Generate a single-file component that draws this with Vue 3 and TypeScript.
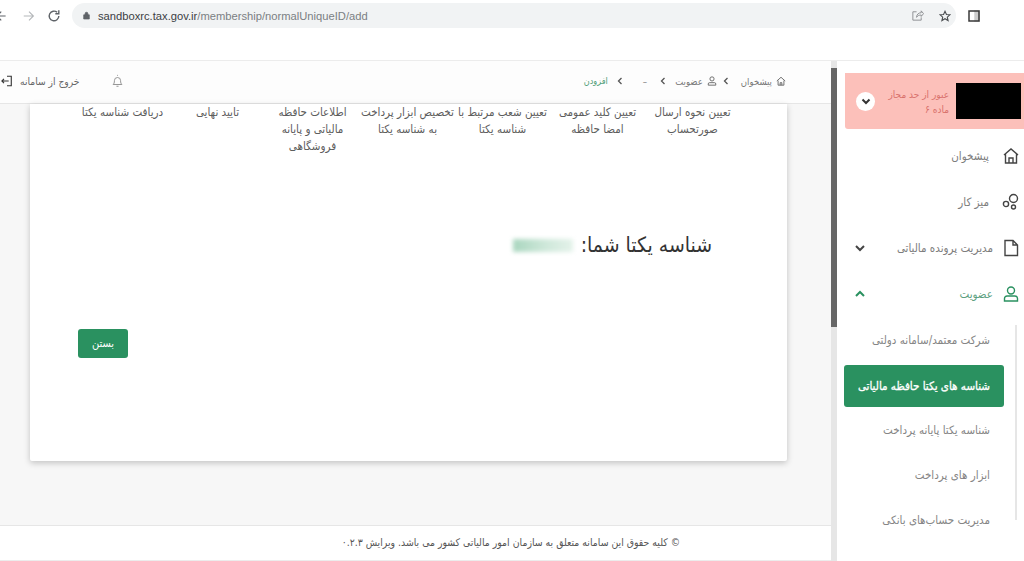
<script setup lang="ts">
const steps: string[][] = [
  ['تعیین نحوه ارسال', 'صورتحساب'],
  ['تعیین کلید عمومی', 'امضا حافظه'],
  ['تعیین شعب مرتبط با', 'شناسه یکتا'],
  ['تخصیص ابزار پرداخت', 'به شناسه یکتا'],
  ['اطلاعات حافظه', 'مالیاتی و پایانه', 'فروشگاهی'],
  ['تایید نهایی'],
  ['دریافت شناسه یکتا'],
]
const subItems: string[] = ['شرکت معتمد/سامانه دولتی', 'شناسه های یکتا حافظه مالیاتی', 'شناسه یکتا پایانه پرداخت', 'ابزار های پرداخت', 'مدیریت حساب‌های بانکی']
</script>

<template>
  <div class="page">
    <div class="chrome" dir="ltr">
      <svg class="nav back" viewBox="0 0 16 16"><path d="M11 8H1M6 3 1 8l5 5" /></svg>
      <svg class="nav fwd" viewBox="0 0 16 16"><path d="M2 8h11M8 3l5 5-5 5" /></svg>
      <svg class="nav reload" viewBox="0 0 16 16"><path d="M13.5 8A5.5 5.5 0 1 1 11.6 3.8M13.5 1.5v4h-4" /></svg>
      <div class="omni">
        <svg class="lock" viewBox="0 0 10 12"><path d="M1 5h8v6H1zM3 5V3.4a2 2 0 0 1 4 0V5" /></svg>
        <span class="url"><b>sandboxrc.tax.gov.ir</b>/membership/normalUniqueID/add</span>
        <svg class="share" viewBox="0 0 14 14"><path d="M6 3H2v9h9V9M6 9c0-3 2-5 5-5V2l2.500 3L11 8V6.500C9 6.500 7 7 6 9Z" /></svg>
        <svg class="star" viewBox="0 0 14 14"><path d="m7 1.500 1.700 3.700 4 .4-3 2.700.9 4L7 10.200l-3.600 2.100.9-4-3-2.700 4-.4Z" /></svg>
      </div>
      <svg class="panel" viewBox="0 0 12 12"><path d="M1 1h10v10H1z" /><path class="fill" d="M7 1h4v10H7z" /></svg>
    </div>
    <div class="gap"></div>

    <div class="shell" dir="rtl">
      <aside class="side">
        <div class="alert">
          <div class="redact"></div>
          <div class="alert-text">عبور از حد مجاز<br />ماده ۶</div>
          <div class="alert-btn">
            <svg viewBox="0 0 12 12"><path d="m2.500 4.500 3.500 3.500 3.500-3.500" /></svg>
          </div>
        </div>
        <div class="item first">
          <svg class="mi" viewBox="0 0 18 18"><path d="M2 8 9 2l7 6M3.500 7v9h11V7M7 16v-5h4v5" /></svg>
          <span>پیشخوان</span>
        </div>
        <div class="item">
          <svg class="mi" viewBox="0 0 18 18"><circle cx="11.500" cy="5.500" r="4" /><circle cx="4" cy="11" r="2.600" /><circle cx="11.500" cy="14" r="2" /></svg>
          <span>میز کار</span>
        </div>
        <div class="item wide">
          <svg class="mi" viewBox="0 0 18 18"><path d="M3 1.500h8l4.500 4.500v10.500H3zM11 1.500V6h4.500" /></svg>
          <span>مدیریت پرونده مالیاتی</span>
          <svg class="caret" viewBox="0 0 12 12"><path d="m2 4 4 4 4-4" /></svg>
        </div>
        <div class="item wide open">
          <svg class="mi" viewBox="0 0 18 18"><circle cx="9" cy="5.500" r="3.500" /><path d="M2.500 16v-2.500a2.500 2.500 0 0 1 2.500-2.500h8a2.500 2.500 0 0 1 2.500 2.500V16z" /></svg>
          <span>عضویت</span>
          <svg class="caret" viewBox="0 0 12 12"><path d="m2 8 4-4 4 4" /></svg>
        </div>
        <div class="subs">
          <div v-for="(s, i) in subItems" :key="s" class="sub" :class="{ active: i === 1 }">{{ s }}</div>
        </div>
      </aside>

      <div class="rail"><div class="thumb"></div></div>

      <div class="main">
        <header class="top">
          <nav class="crumbs">
            <svg class="ci" viewBox="0 0 12 12"><path d="M1 6 6 1.500 11 6M2.500 5.500V11h7V5.500M5 11V8h2v3" /></svg>
            <span>پیشخوان</span>
            <svg class="sep sep-first" viewBox="0 0 8 8"><path d="m5.500 1-3 3 3 3" /></svg>
            <svg class="ci" viewBox="0 0 12 12"><circle cx="6" cy="3.500" r="2.500" /><path d="M1.500 11V9.500A1.500 1.500 0 0 1 3 8h6a1.500 1.500 0 0 1 1.500 1.500V11z" /></svg>
            <span>عضویت</span>
            <svg class="sep" viewBox="0 0 8 8"><path d="m5.500 1-3 3 3 3" /></svg>
            <span class="dash">–</span>
            <svg class="sep" viewBox="0 0 8 8"><path d="m5.500 1-3 3 3 3" /></svg>
            <span class="cur">افزودن</span>
          </nav>
          <div class="tools">
            <svg class="bell" viewBox="0 0 14 16"><path d="M2 12c1-1 1.500-2 1.500-4.500a3.500 3.500 0 0 1 7 0C10.500 10 11 11 12 12ZM7 2V1M5.800 14h2.400" /></svg>
            <span class="logout">خروج از سامانه</span>
            <svg class="exit" viewBox="0 0 14 14"><path d="M7 1.500h5v11H7M9 7H1M3.500 4.500 1 7l2.500 2.500" /></svg>
          </div>
        </header>

        <div class="content">
          <section class="card">
            <div class="steps">
              <div v-for="s in steps" :key="s[0]" class="step">
                <div v-for="line in s" :key="line">{{ line }}</div>
              </div>
            </div>
            <div class="result">
              <span>شناسه یکتا شما:</span>
              <span class="blurred"></span>
            </div>
            <div class="actions"><button class="close">بستن</button></div>
          </section>
        </div>

        <footer class="foot">© کلیه حقوق این سامانه متعلق به سازمان امور مالیاتی کشور می باشد. ویرایش ۰.۲.۳</footer>
      </div>
    </div>
  </div>
</template>

<style scoped>
.page {
  width: 1024px;
  height: 561px;
  overflow: hidden;
  background: #fff;
  display: flex;
  flex-direction: column;
  font-family: "DejaVu Sans Condensed", "DejaVu Sans", sans-serif;
  color: #666;
}
svg { fill: none; stroke: currentColor; stroke-width: 1.3; flex: none; }

.chrome { height: 31px; display: flex; align-items: center; flex: none; color: #5f6368; }
.nav { width: 14px; height: 14px; }
.back { margin-left: -4px; }
.fwd { margin-left: 12px; color: #b4b7ba; }
.reload { margin-left: 11px; stroke-width: 1.6; }
.omni {
  margin-left: 11px;
  width: 884px;
  height: 25px;
  background: #f1f3f4;
  border-radius: 13px;
  display: flex;
  align-items: center;
  padding-left: 11px;
  box-sizing: border-box;
}
.lock { width: 7px; height: 9px; fill: #5f6368; stroke-width: 1; }
.url { margin-left: 8px; font: 400 11.2px "Liberation Sans", sans-serif; color: #7b7f83; flex: 1; }
.url b { font-weight: 400; color: #3c4043; }
.share { width: 13px; height: 13px; color: #8a8d90; stroke-width: 1; margin-right: 15px; }
.star { width: 12px; height: 12px; color: #4a4d50; stroke-width: 1.3; margin-right: 5px; }
.panel { width: 12px; height: 12px; margin-left: 12px; color: #3a3a3a; stroke-width: 1.5; }
.panel .fill { fill: #3a3a3a; opacity: .25; }
.gap { height: 29px; flex: none; }

.shell { flex: 1; min-height: 0; display: flex; border-top: 1px solid #ececec; }

.side { width: 187px; flex: none; padding-top: 12px; box-sizing: border-box; }
.alert {
  margin-left: 8px;
  height: 56px;
  background: #fcc0ba;
  border-radius: 0 0 0 3px;
  display: flex;
  align-items: center;
}
.redact { width: 65px; height: 36px; background: #000; margin-right: 3px; flex: none; }
.alert-text { width: 72px; margin-right: 7px; padding-top: 2px; font-size: 10px; line-height: 15px; color: #d9726d; text-align: right; flex: none; white-space: nowrap; }
.alert-btn {
  width: 19px;
  height: 19px;
  border-radius: 50%;
  background: #fff;
  margin-right: 2px;
  display: flex;
  align-items: center;
  justify-content: center;
  color: #333;
}
.alert-btn svg { width: 12px; height: 12px; stroke-width: 2; }

.item { height: 46px; display: flex; align-items: center; font-size: 11.5px; color: #7d7d7d; position: relative; padding-right: 4px; }
.first { margin-top: 4px; }
.mi { width: 18px; height: 18px; color: #444; stroke-width: 1.4; margin-left: 13px; }
.wide .mi { margin-left: 9px; }
.item .caret { position: absolute; left: 17px; top: 17px; width: 12px; height: 12px; color: #444; stroke-width: 2; }
.open .mi, .item.open .caret { color: #2a9160; }
.open span { color: #5c9f80; }

.subs { padding-right: 34px; padding-left: 7px; position: relative; }
.subs::before { content: ""; position: absolute; right: 7px; top: 8px; bottom: 22px; width: 2px; background: #e6e6e6; }
.sub { height: 45px; display: flex; align-items: center; font-size: 11.5px; color: #858585; white-space: nowrap; }
.sub.active {
  height: 42px;
  margin: 3px -14px 0 0;
  padding-right: 14px;
  background: #2a9160;
  color: #fff;
  border-radius: 3px;
  -webkit-text-stroke: .3px #fff;
}

.rail { width: 6px; flex: none; background: #e6e6e6; }
.thumb { margin-top: 7px; height: 259px; background: #666; }

.main { flex: 1; min-width: 0; display: flex; flex-direction: column; }
.top {
  flex: none;
  background: #fdfdfd;
  border-bottom: 1px solid #e6e6e6;
  display: flex;
  align-items: center;
  justify-content: space-between;
  padding-right: 45px;
  padding-bottom: 2px;
  height: 40px;
  font-size: 9.5px;
  color: #777;
}
.crumbs { display: flex; align-items: center; }
.ci { width: 10px; height: 10px; color: #666; stroke-width: 1.1; margin-left: 4px; }
.sep { width: 8px; height: 8px; margin: 0 8px; color: #555; }
.sep-first { margin: 0 11px 0 5px; }
.dash { color: #777; margin: 0 4px 0 11px; }
.cur { color: #4f9e78; font-size: 9px; }
.tools { display: flex; align-items: center; }
.bell { width: 13px; height: 14px; color: #888; stroke-width: 1; margin-left: 31px; }
.logout { color: #666; margin-left: 7px; font-size: 10.2px; }
.exit { width: 12px; height: 12px; color: #333; margin-left: 1px; }

.content { flex: 1; min-height: 0; background: #f7f7f7; padding-right: 44px; padding-left: 30px; }
.card {
  height: 357px;
  background: #fff;
  box-shadow: 0 2px 6px rgba(0, 0, 0, .22);
  border-radius: 0 0 2px 2px;
  box-sizing: border-box;
  padding: 0 47px 0 44px;
}
.steps { display: grid; grid-template-columns: repeat(7, 95px); height: 129px; align-content: start; }
.step { font-size: 11.5px; line-height: 17px; text-align: center; color: #5d5d5d; white-space: nowrap; }
.result { display: flex; align-items: center; font-size: 21px; color: #333; margin-right: 28px; height: 24px; }
.blurred {
  width: 60px;
  height: 13px;
  margin-right: 8px;
  background: linear-gradient(90deg, #a9d6bf, #cfe8da 55%, #e4f2ea);
  filter: blur(2px);
}
.actions { margin-top: 72px; display: flex; justify-content: flex-end; margin-left: 4px; }
.close {
  width: 50px;
  height: 29px;
  border: 0;
  border-radius: 3px;
  background: #2a9160;
  color: #fff;
  font: inherit;
  font-size: 11px;
  padding: 0;
}

.foot {
  height: 36px;
  flex: none;
  background: #fff;
  border-top: 1px solid #e6e6e6;
  border-bottom: 1px solid #ececec;
  box-sizing: border-box;
  display: flex;
  align-items: center;
  padding-right: 151px;
  padding-bottom: 3px;
  font-size: 10.4px;
  color: #555;
  white-space: nowrap;
}
</style>
